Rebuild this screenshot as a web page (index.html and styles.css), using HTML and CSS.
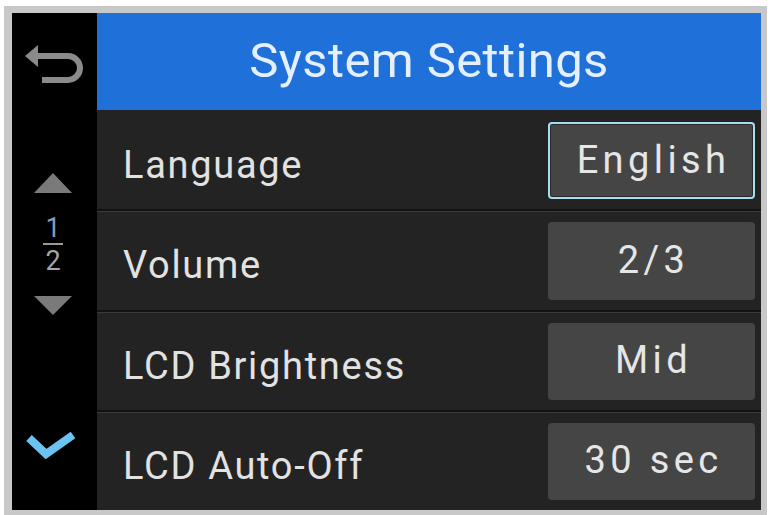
FILE: index.html
```html
<!DOCTYPE html>
<html>
<head>
<meta charset="utf-8">
<link rel="stylesheet" href="styles.css">
</head>
<body>
<div class="frame">
  <div class="screen">
    <aside class="side">
      <div class="back">
        <svg width="85" height="97" viewBox="0 0 85 97">
          <path d="M22 43 H56 A12 12 0 0 1 56 67 H30" fill="none" stroke="#8a8a8a" stroke-width="6"/>
          <path d="M13 43 L26 32 L26 54 Z" fill="#8a8a8a"/>
        </svg>
      </div>
      <div class="pager">
        <svg class="tri" width="38" height="20" viewBox="0 0 38 20"><path d="M19 0 L38 20 H0 Z" fill="#7a7a7a"/></svg>
        <div class="frac">
          <span class="num">1</span>
          <span class="bar"></span>
          <span class="den">2</span>
        </div>
        <svg class="tri" width="38" height="19" viewBox="0 0 38 19"><path d="M0 0 H38 L19 19 Z" fill="#7a7a7a"/></svg>
      </div>
      <div class="ok">
        <svg width="60" height="40" viewBox="0 0 60 40">
          <path d="M5 11 L22 27 L49 8" fill="none" stroke="#6cc3f2" stroke-width="8" stroke-linejoin="miter"/>
        </svg>
      </div>
    </aside>
    <main class="main">
      <header class="title">System Settings</header>
      <div class="row">
        <span class="label">Language</span>
        <span class="value selected">English</span>
      </div>
      <div class="row">
        <span class="label">Volume</span>
        <span class="value">2/3</span>
      </div>
      <div class="row">
        <span class="label">LCD Brightness</span>
        <span class="value">Mid</span>
      </div>
      <div class="row">
        <span class="label">LCD Auto-Off</span>
        <span class="value">30 sec</span>
      </div>
    </main>
  </div>
</div>
</body>
</html>
```

FILE: styles.css
```css
* { box-sizing: border-box; }
html, body { margin: 0; padding: 0; background: #ffffff; }
body { font-family: Roboto, "Liberation Sans", sans-serif; }

.frame {
  margin: 6px 0 0 4px;
  width: 763px;
  height: 509px;
  background: #c8c8c8;
  padding: 7px 6px 5px 8px;
}

.screen {
  display: grid;
  grid-template-columns: 85px 1fr;
  height: 497px;
  background: #000;
}

.side {
  background: #000;
  display: flex;
  flex-direction: column;
}
.back { height: 97px; }
.back svg { display: block; }

.pager {
  display: flex;
  flex-direction: column;
  align-items: center;
  padding-top: 63px;
  padding-right: 3px;
}
.tri { display: block; }
.frac {
  display: flex;
  flex-direction: column;
  align-items: center;
  margin: 22px 0 24px;
  font-size: 27px;
  line-height: 1;
}
.num { color: #7f9cbc; height: 26px; }
.bar { width: 20px; height: 2px; background: #9a9a9a; margin: 2px 0 3px; }
.den { color: #a6a6a6; height: 24px; }

.ok { margin-top: 112px; padding-left: 12px; }
.ok svg { display: block; }

.main {
  display: flex;
  flex-direction: column;
  background: #232323;
}

.title {
  height: 97px;
  background: #1f70d9;
  color: #e4f0ff;
  font-size: 49px;
  letter-spacing: 0.4px;
  display: flex;
  align-items: center;
  justify-content: center;
  padding-bottom: 2px;
}

.row {
  flex: 1;
  display: flex;
  align-items: stretch;
  justify-content: space-between;
  padding: 11px 6px 10px 26px;
  border-top: 2px solid #121212;
  box-shadow: inset 0 1px 0 #3a3a3a;
}
.row:nth-child(2) { border-top: none; box-shadow: none; padding-top: 12px; }

.label {
  color: #e2e2e2;
  font-size: 38px;
  letter-spacing: 1.7px;
  display: flex;
  align-items: center;
  padding-top: 9px;
}

.value {
  width: 207px;
  background: #454545;
  border-radius: 4px;
  color: #e6e6e6;
  font-size: 38px;
  letter-spacing: 4.4px;
  display: flex;
  align-items: center;
  justify-content: center;
  padding-bottom: 2px;
  padding-left: 4px;
}
.value.selected {
  border: 2px solid #a6dbf0;
  box-shadow: inset 0 0 0 1px #2a2a2a;
}
```
